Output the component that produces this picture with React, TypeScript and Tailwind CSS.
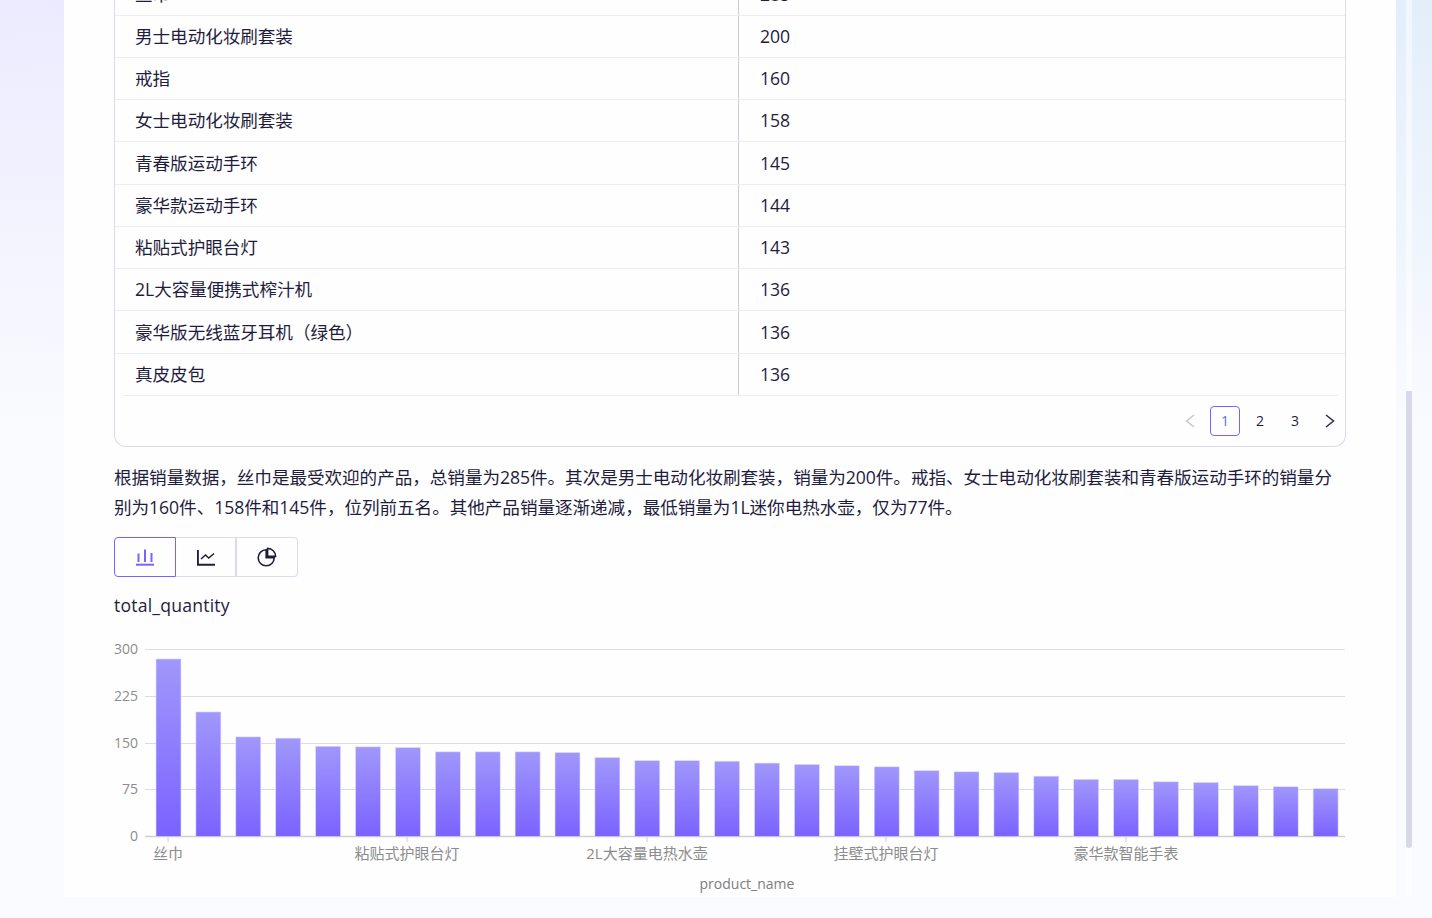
import React from 'react';

const rows: [string, number][] = [
    ['丝巾', 285],
    ['男士电动化妆刷套装', 200],
    ['戒指', 160],
    ['女士电动化妆刷套装', 158],
    ['青春版运动手环', 145],
    ['豪华款运动手环', 144],
    ['粘贴式护眼台灯', 143],
    ['2L大容量便携式榨汁机', 136],
    ['豪华版无线蓝牙耳机（绿色）', 136],
    ['真皮皮包', 136],
];

const bars = [
    285, 200, 160, 158, 145, 144, 143, 136, 136, 136,
    135, 127, 122, 122, 121, 118, 116, 114, 112, 106,
    104, 103, 97, 92, 92, 88, 87, 82, 80, 77,
];

const yTicks = [
    { label: '300', y: 649.5 },
    { label: '225', y: 696.5 },
    { label: '150', y: 743.5 },
    { label: '75', y: 789.5 },
    { label: '0', y: 836.5 },
];

const xTicks = [
    { label: '丝巾', x: 168 },
    { label: '粘贴式护眼台灯', x: 407 },
    { label: '2L大容量电热水壶', x: 647 },
    { label: '挂壁式护眼台灯', x: 886 },
    { label: '豪华款智能手表', x: 1126 },
];

const BarChart = () => (
    <svg width={1232} height={267} viewBox="114 630 1232 267" className="block">
        <defs>
            <linearGradient id="barFill" x1="0" y1="0" x2="0" y2="1">
                <stop offset="0%" stopColor="#a197fb" />
                <stop offset="100%" stopColor="#7a62ff" />
            </linearGradient>
        </defs>
        {yTicks.map(t => (
            <g key={t.label}>
                <line x1={145} x2={1345} y1={t.y} y2={t.y} stroke={t.label === '0' ? '#cfcfcf' : '#dddcdf'} strokeWidth={t.label === '0' ? 1.5 : 1} />
                <text x={138} y={t.y + 4.5} textAnchor="end" fontSize={14} fill="#8c8c8c">{t.label}</text>
            </g>
        ))}
        {bars.map((v, i) => {
            const h = v * 0.6233;
            return (
                <rect
                    key={i}
                    x={156 + i * 39.9}
                    y={836.6 - h}
                    width={25}
                    height={h}
                    fill="url(#barFill)"
                    stroke="#e4e0ff"
                    strokeWidth={0.6}
                />
            );
        })}
        {xTicks.map(t => (
            <g key={t.label}>
                <line x1={t.x} x2={t.x} y1={837} y2={842} stroke="#cfcfcf" />
                <text x={t.x} y={859} textAnchor="middle" fontSize={15} fill="#8c8c8c">{t.label}</text>
            </g>
        ))}
        <text x={747} y={889} textAnchor="middle" fontSize={14} fill="#7d7d7d">product_name</text>
    </svg>
);

export default function App() {
    return (
        <div
            lang="zh-CN"
            className="h-[918px] overflow-hidden bg-[linear-gradient(to_bottom,transparent,#fafbfe_440px),linear-gradient(to_right,#ecebff,#e3eefb)] font-['Open_Sans','Noto_Sans_CJK_SC',sans-serif] text-[#1f1d3d]"
        >
            <div className="flex h-[897px]">
                <div className="w-16 shrink-0" />
                <main className="w-[1332px] shrink-0 overflow-hidden bg-[#fefefe] px-[50px]">
                    <div className="mt-[-26.75px] rounded-b-xl border border-t-0 border-[#dcdbed]">
                        {rows.map((r, i) => (
                            <div
                                key={r[0]}
                                className={`flex items-center text-[17.6px] tracking-[-0.05px] ${i < rows.length - 1 ? 'h-[42.25px] border-b border-[#eeedf3]' : 'h-[41.5px]'}`}
                            >
                                <div className="flex h-full w-[624px] items-center border-r border-[#cbcbe0] pl-5">{r[0]}</div>
                                <div className="pl-[21px] tracking-normal">{r[1]}</div>
                            </div>
                        ))}
                        <div className="mx-[7px] border-t border-[#eeedf3]" />
                        <div className="flex h-[50px] items-center justify-end pr-[10px] text-sm">
                            <svg width={10} height={14} viewBox="0 0 10 14" fill="none" stroke="#c6c6d6" strokeWidth={1.5} className="mr-[15px]">
                                <path d="M9 1L1.5 7 9 13" />
                            </svg>
                            <span className="flex h-[30px] w-[30px] items-center justify-center rounded border border-[#7b61ff] text-[#5d6cf2]">1</span>
                            <span className="flex h-[30px] w-10 items-center justify-center">2</span>
                            <span className="flex h-[30px] w-[30px] items-center justify-center">3</span>
                            <svg width={10} height={14} viewBox="0 0 10 14" fill="none" stroke="#2b2a4a" strokeWidth={1.5} className="ml-[15px]">
                                <path d="M1 1l7.5 6L1 13" />
                            </svg>
                        </div>
                    </div>

                    <p className="mt-[15px] text-[17.6px] leading-[30px] tracking-[-0.05px]">
                        根据销量数据，丝巾是最受欢迎的产品，总销量为285件。其次是男士电动化妆刷套装，销量为200件。戒指、女士电动化妆刷套装和青春版运动手环的销量分
                        <br />
                        别为160件、158件和145件，位列前五名。其他产品销量逐渐递减，最低销量为1L迷你电热水壶，仅为77件。
                    </p>

                    <div className="mt-[14.75px] flex h-10 w-[184px]">
                        <button className="flex w-[62px] items-center justify-center rounded-l border border-[#7b61ff] text-[#7b61ff]">
                            <svg width={18} height={18} viewBox="0 0 18 18" fill="none" stroke="currentColor" strokeWidth={2}>
                                <path d="M2.5 5.5v8.5M9 1.5V14M15.5 5V14" />
                                <path d="M0 16.7h18" />
                            </svg>
                        </button>
                        <button className="flex w-[61px] items-center justify-center border-y border-r-2 border-[#dcdbed]">
                            <svg width={18} height={18} viewBox="0 0 18 18" fill="none" stroke="currentColor" strokeWidth={1.9}>
                                <path d="M0.9 2v14.7H18" />
                                <path d="M4 11l4.5-4 3.2 3L17 5.5" strokeWidth={1.5} />
                            </svg>
                        </button>
                        <button className="flex w-[61px] items-center justify-center rounded-r border-y border-r border-[#dcdbed]">
                            <svg width={20} height={20} viewBox="0 0 20 20" fill="none" stroke="currentColor" strokeWidth={1.6}>
                                <path d="M9.2 2.8A8 8 0 1 0 17.2 10.8H9.2Z" />
                                <path d="M10.6 1.4A8 8 0 0 1 18.6 9.4H10.6Z" />
                            </svg>
                        </button>
                    </div>

                    <div className="mt-4 text-[17.6px] leading-6 tracking-[0.2px]">total_quantity</div>

                    <div className="mt-[13px]">
                        <BarChart />
                    </div>
                </main>
                <div className="w-2.5 shrink-0" />
                <div className="flex w-1.5 shrink-0 flex-col bg-white/50">
                    <div className="h-[391px] shrink-0" />
                    <div className="h-[457px] shrink-0 rounded-b-sm bg-[#d8d9e8]" />
                </div>
            </div>
        </div>
    );
}
